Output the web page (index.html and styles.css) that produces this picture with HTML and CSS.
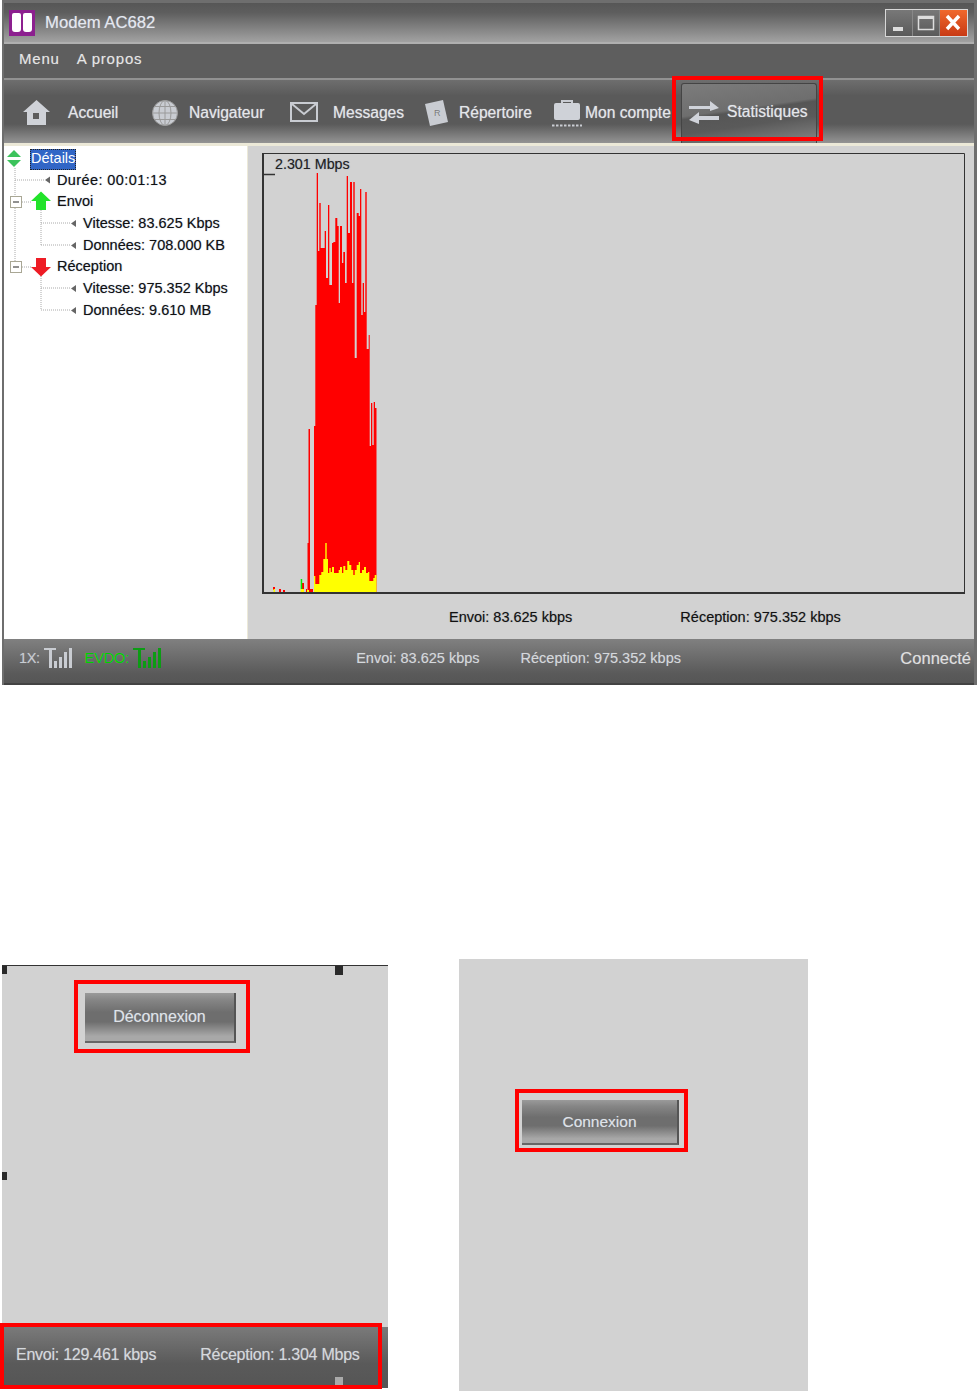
FILE: index.html
```html
<!DOCTYPE html>
<html lang="fr">
<head>
<meta charset="utf-8">
<title>Modem AC682</title>
<link rel="stylesheet" href="styles.css">
</head>
<body>
<main class="page">
  <section class="window">
    <header class="titlebar">
      <svg class="logo" viewBox="0 0 26 26"><rect width="26" height="26" fill="#8c1f8f"/><path d="M3 5q0-2 2-2h5q2 0 2 2v14q0 3-3 3H6q-3 0-3-3z" fill="#fff"/><path d="M14 5q0-2 2-2h6q1 0 1 2v14q0 3-3 3h-3q-3 0-3-3z" fill="#fff"/></svg>
      <h1 class="title">Modem AC682</h1>
      <div class="winbtns">
        <span class="winbtn"><svg viewBox="0 0 26 26"><rect x="7" y="17" width="10" height="4" fill="#ddd"/></svg></span>
        <span class="winbtn"><svg viewBox="0 0 26 26"><rect x="5.500" y="6.500" width="15" height="13" fill="none" stroke="#ddd" stroke-width="1.500"/><rect x="5" y="6" width="16" height="3" fill="#ddd"/></svg></span>
        <span class="winbtn close"><svg viewBox="0 0 26 26"><path d="M7 6l12 13M19 6L7 19" stroke="#fff" stroke-width="3.400" fill="none"/></svg></span>
      </div>
    </header>
    <nav class="menubar"><span>Menu</span><span>A propos</span></nav>
    <nav class="toolbar">
      <span class="tool t-home"><svg class="i-home" viewBox="0 0 27 25"><path d="M13.500 0L27 12h-4v13H4V12H0z" fill="#cfd2d8"/><rect x="10" y="13" width="6" height="6" fill="#5d5d5d"/></svg>Accueil</span>
      <span class="tool t-nav"><svg class="i-globe" viewBox="0 0 26 26"><g fill="none" stroke="#9a9a9a"><circle cx="13" cy="13" r="12.500" fill="#c9ccd2"/><ellipse cx="13" cy="13" rx="6" ry="12.500"/><path d="M13 .5v25M.5 13h25M2.500 6.500h21M2.500 19.500h21"/></g></svg>Navigateur</span>
      <span class="tool t-msg"><svg class="i-mail" viewBox="0 0 28 20"><rect x="1" y="1" width="26" height="18" fill="none" stroke="#c9ccd2" stroke-width="2"/><path d="M2 2l12 10L26 2" fill="none" stroke="#c9ccd2" stroke-width="2"/></svg>Messages</span>
      <span class="tool t-rep"><svg class="i-card" viewBox="0 0 24 26"><path d="M1 4L19 0l5 22-18 4z" fill="#c9ccd2"/><text x="10" y="16" class="cardtext">R</text></svg>Répertoire</span>
      <span class="tool t-acc"><svg class="i-case" viewBox="0 0 30 28"><path d="M10 5V2h10v3" fill="none" stroke="#c9ccd2" stroke-width="2"/><rect x="2" y="4" width="26" height="17" rx="2" fill="#cfd2d8"/><path d="M0 26.500h30" stroke="#c9ccd2" stroke-width="2" stroke-dasharray="2.500 1.500"/></svg>Mon compte</span>
      <span class="tool t-stat"><svg class="i-swap" viewBox="0 0 32 24"><path d="M1 6h21V1l9 7-9 3V9H1zM31 16H11v-4l-10 8 10 4v-4h20z" fill="#d0d3da"/></svg>Statistiques</span>
    </nav>
    <div class="content">
      <aside class="tree">
        <svg class="treelines" viewBox="0 0 243 200">
          <g transform="translate(-4 -146)">
            <g fill="none" stroke="#aaa" stroke-dasharray="1 1">
              <path d="M15 168V262M15 180H45M22 202H31M22 267H31M41 210V245M41 223H71M41 245H71M41 276V310M41 288H71M41 310H71"/>
            </g>
            <g fill="#666">
              <path d="M45 180l5-3.500v7zM71 223.500l5-3.500v7zM71 245.500l5-3.500v7zM71 288.500l5-3.500v7zM71 310.500l5-3.500v7z"/>
            </g>
            <path d="M14 150l7 7H7z" fill="#3cc35c"/><path d="M14 167l7-7H7z" fill="#3cc35c"/>
            <g fill="#fff" stroke="#a9a795"><rect x="10.500" y="196.500" width="11" height="11"/><rect x="10.500" y="261.500" width="11" height="11"/></g>
            <path d="M13 202h6M13 267h6" stroke="#222"/>
            <path d="M41 191.500l10 9.500h-5v9h-10v-9h-5z" fill="#22e32a"/>
            <path d="M41 276.500l10-9.500h-5v-9h-10v9h-5z" fill="#ee1c25"/>
          </g>
        </svg>
        <ul class="rows">
          <li class="row r1"><span class="sel">Détails</span></li>
          <li class="row r1 wide">Durée: 00:01:13</li>
          <li class="row r1">Envoi</li>
          <li class="row r2">Vitesse: 83.625 Kbps</li>
          <li class="row r2">Données: 708.000 KB</li>
          <li class="row r1">Réception</li>
          <li class="row r2">Vitesse: 975.352 Kbps</li>
          <li class="row r2">Données: 9.610 MB</li>
        </ul>
      </aside>
      <div class="plot">
        <figure class="chart">
          <span class="peak">2.301 Mbps</span>
          <svg class="graph" viewBox="262 153 703 441">
            <path fill="#f00" d="M307.500 592V543H308.500V429H310V592H314V426H315.300V305H316.700V173H318V251H319.300V203H320.700V248H324.700V231H326V278H328V205H329.300V285H332V243H333.300V242H335.300V218H337.300V226H338.700V303H340V226H342V263H343.300V252H345V283H346.700V176H348V233H350V182H352V283H353.300V182H354.700V358H356.700V213H358.700V216H360V189H361.300V315H362.700V283H364V312H365.300V192H366.700V349H368.700V335H369.700V446H371V403H372.300V445H373.700V402H375V408H376.500V592Z"/>
            <path fill="#ff0" d="M314 592V576H315.300V584H319.300V575H321.300V572H323.300V559H325.300V543H326.700V559H328V573H329.300V568H330.700V572H332V567H334V573H338.700V570H340V567H342V573H343.300V566H345.300V570H347.300V561H349.300V565H351.300V570H353.300V575H354.700V570H356.700V565H358.700V562H360V573H362V570H364V567H366V573H368V572H369.300V581H373.300V578H374.700V575H376.500V592Z"/>
            <path fill="#f00" d="M273 590h2v-3h-2zM279 592h2v-3h-2zM283 592h2v-2h-2zM302 592h2v-9h-2zM306 592h1v-3h-1zM309 592h4v-3h-4z"/>
            <path fill="#0e0" d="M300.700 589h1.500v-10h-1.500z"/>
            <path fill="#ff0" d="M273.500 592h1.500v-3h-1.500zM300.700 592h3.300v-3h-3.300zM307 592h2v-2h-2z"/>
            <path fill="none" stroke="#333" d="M264 153.500H964.500V592"/>
            <path fill="none" stroke="#333" stroke-width="2" d="M263 153V593H965"/>
            <path stroke="#333" stroke-width="1.500" d="M263 174.500H275"/>
          </svg>
        </figure>
        <div class="rates"><span>Envoi: 83.625 kbps</span><span>Réception: 975.352 kbps</span></div>
      </div>
    </div>
    <footer class="statusbar">
      <span class="sig">1X:</span>
      <svg class="bars" viewBox="0 0 28 20"><g fill="#c9ccd2"><path d="M0 0h12v2H8v18H5V2H0z"/><rect x="10" y="13" width="3" height="7"/><rect x="15" y="9" width="3" height="11"/><rect x="20" y="4" width="3" height="16"/><rect x="25" y="0" width="3" height="20"/></g></svg>
      <span class="sig evdo">EVDO:</span>
      <svg class="bars" viewBox="0 0 28 20"><g fill="#0c9c14"><path d="M0 0h12v2H8v18H5V2H0z"/><rect x="10" y="13" width="3" height="7"/><rect x="15" y="9" width="3" height="11"/><rect x="20" y="4" width="3" height="16"/><rect x="25" y="0" width="3" height="20"/></g></svg>
      <span class="st-send">Envoi: 83.625 kbps</span>
      <span class="st-recv">Réception: 975.352 kbps</span>
      <span class="st-conn">Connecté</span>
    </footer>
  </section>

  <div class="lower">
    <section class="panel p-left">
      <i class="grip g1"></i><i class="grip g2"></i><i class="grip g3"></i>
      <button class="btn b-off" type="button">Déconnexion</button>
      <div class="panelbar">
        <span>Envoi: 129.461 kbps</span><span>Réception: 1.304 Mbps</span>
        <i class="grip g4"></i>
      </div>
    </section>
    <section class="panel p-right">
      <button class="btn b-on" type="button">Connexion</button>
    </section>
  </div>
</main>
</body>
</html>
```

FILE: styles.css
```css
* { box-sizing: border-box; }
html, body { margin: 0; padding: 0; background: #fff; }
body { font-family: "Liberation Sans", Arial, sans-serif; }
.page { width: 977px; height: 1391px; overflow: hidden; }

.window { margin-left: 2px; width: 975px; height: 685px; display: flex; flex-direction: column;
  background: #6e6e6e; padding: 3px 3px 0 2px; }

.titlebar { height: 39px; flex: none; display: flex; align-items: center; padding: 0 6px 0 5px;
  background: linear-gradient(#565656, #5e5e5e 25%, #a2a2a2); }
.logo { width: 26px; height: 26px; flex: none; }
.title { margin: 2px 0 0 10px; font-size: 16.700px; font-weight: 400; color: #e4e8f0; line-height: 1;
  text-shadow: 0 0 1px rgba(220,230,245,.5); }
.winbtns { margin-left: auto; display: flex; background: #d8d8d8; padding: 1px; }
.winbtn { width: 27px; height: 26px; background: linear-gradient(#787878, #5a5a5a); display: block; border-right: 1px solid #888; }
.winbtn svg { width: 26px; height: 26px; display: block; }
.winbtn.close { background: linear-gradient(#f0682c, #c83a14); border: 0; }

.menubar { height: 38px; flex: none; display: flex; gap: 17px; align-items: center; padding: 0 0 6px 15px;
  background: #5e5e5e; border-top: 2px solid #b0b0b0; border-bottom: 2px solid #929292;
  color: #e6e6e6; font-size: 15px; letter-spacing: .8px; text-shadow: 0 0 1px rgba(230,230,230,.35); }

.toolbar { height: 63px; flex: none; display: flex; align-items: center; padding: 2px 0 0 19px; position: relative;
  background: linear-gradient(#6e6e6e, #5a5a5a 25%, #5a5a5a 70%, #949494);
  color: #e4e6ea; font-size: 15.600px; text-shadow: 0 0 1px rgba(235,238,245,.6); }
.tool { display: flex; align-items: center; flex: none; white-space: nowrap; }
.tool svg { flex: none; display: block; }
.t-home { width: 129px; }
.i-home { width: 27px; height: 25px; margin-right: 18px; }
.t-nav { width: 138px; }
.i-globe { width: 26px; height: 26px; margin-right: 11px; }
.t-msg { width: 134px; }
.i-mail { width: 28px; height: 20px; margin-right: 15px; margin-top: -2px; }
.t-rep { width: 128px; }
.i-card { width: 24px; height: 26px; margin-right: 11px; }
.cardtext { font-size: 9px; fill: #777; font-family: "Liberation Sans", sans-serif; }
.t-acc { width: 129px; }
.i-case { width: 30px; height: 28px; margin-right: 3px; margin-top: 1px; }
.t-stat { width: 136px; height: 60px; margin-top: 1px; padding: 0 0 3px 6px; position: relative; border: 1px solid #444;
  border-bottom: 0; border-radius: 3px 3px 0 0;
  background: linear-gradient(172deg, #7c7c7c, #6e6e6e 42%, #565656 46%, #5a5a5a 65%, #868686); }
.i-swap { width: 32px; height: 24px; margin-right: 7px; }
.t-stat::after { content: ""; position: absolute; left: -10px; right: -7px; top: -8px; bottom: 2px; border: 4px solid #f00; }

.content { height: 496px; flex: none; display: flex; border-top: 3px solid #ece9d8; }
.tree { width: 244px; flex: none; position: relative; background: #fff; border-right: 1px solid #ece9d8; }
.treelines { position: absolute; left: 0; top: 0; width: 243px; height: 200px; }
.rows { list-style: none; margin: 0; padding: 2px 0 0; position: relative; color: #111; font-size: 14.500px;
  text-shadow: 0 0 1px rgba(50,70,120,.55); }
.row { height: 21.700px; line-height: 21.700px; white-space: nowrap; }
.r1 { padding-left: 53px; }
.r2 { padding-left: 79px; }
.r1:first-child { padding-left: 26px; }
.wide { letter-spacing: .4px; }
.sel { display: inline-block; height: 21px; line-height: 19px; padding: 0 1px; background: #3166c6; color: #fff; outline: 1px dotted #222; outline-offset: -1px; text-shadow: none; }

.plot { flex: 1; background: #d2d2d2; display: flex; flex-direction: column; padding: 7px 0 0 14px; }
.chart { margin: 0; width: 703px; height: 441px; position: relative; flex: none; }
.graph { display: block; width: 703px; height: 441px; }
.peak { position: absolute; left: 13px; top: 3px; font-size: 14.300px; line-height: 16px; color: #222; text-shadow: 0 0 1px rgba(50,70,120,.5); }
.rates { display: flex; padding: 14px 0 0 187px; gap: 108px; font-size: 14.500px; color: #111; line-height: 18px; text-shadow: 0 0 1px rgba(50,50,60,.45); }

.statusbar { height: 46px; flex: none; display: flex; align-items: center; padding: 0 3px 8px 15px;
  background: linear-gradient(#808080, #5a5a5a 75%, #565656 95%, #434343 95%);
  color: #d5d8dc; font-size: 14.500px; text-shadow: 0 0 1px rgba(220,225,235,.35); }
.statusbar .sig { font-size: 14.500px; letter-spacing: -.4px; color: #c8ccd2; }
.bars { width: 28px; height: 20px; margin-left: 4px; flex: none; }
.statusbar .evdo { color: #00cf00; margin-left: 13px; letter-spacing: -.1px; }
.st-send { margin-left: 195px; }
.st-recv { margin-left: 41px; }
.st-conn { margin-left: auto; font-size: 16.500px; color: #e0e0e0; }

.lower { margin-top: 274px; display: flex; align-items: flex-start; }
.panel { position: relative; background: #d2d2d2; }
.p-left { width: 386px; height: 423px; margin: 6px 0 0 2px; border-top: 1px solid #333; display: flex; flex-direction: column; }
.p-right { width: 349px; height: 432px; margin-left: 71px; padding: 141px 0 0 63px; }

.btn { display: block; border: 0; border-right: 2px solid #555; border-bottom: 2px solid #666; padding: 0; color: #dfe3e9; font-family: inherit; position: relative;
  text-shadow: 0 0 1px rgba(220,225,235,.4);
  background: linear-gradient(#9a9a9a, #858585 15%, #6e6e6e 40%, #6e6e6e 60%, #a8a8a8 90%); }
.btn::after { content: ""; position: absolute; border: 4px solid #f00; }
.b-off { width: 151px; height: 50px; margin: 27px 0 0 83px; font-size: 16px; letter-spacing: -.1px; }
.b-off::after { left: -11px; right: -16px; top: -13px; bottom: -12px; }
.b-on { width: 157px; height: 45px; font-size: 15.500px; }
.b-on::after { left: -7px; right: -11px; top: -11px; bottom: -9px; }

.panelbar { margin-top: auto; height: 61px; display: flex; gap: 44px; padding: 15px 0 0 14px; align-items: flex-start; position: relative; line-height: 26px;
  background: linear-gradient(#7a7a7a, #5a5a5a 60%, #555); color: #d5d8dc; font-size: 16px; letter-spacing: -.25px; text-shadow: 0 0 1px rgba(220,225,235,.45); }
.panelbar::after { content: ""; position: absolute; left: -2px; top: -4px; width: 374px; height: 58px; border: 4px solid #f00; box-sizing: content-box; }

.grip { position: absolute; background: #2a2a2a; }
.g1 { left: 0; top: 0; width: 5px; height: 8px; }
.g2 { left: 333px; top: 0; width: 8px; height: 9px; }
.g3 { left: 0; top: 206px; width: 5px; height: 8px; }
.g4 { left: 333px; bottom: 3px; width: 8px; height: 8px; background: #aaa; }
```
